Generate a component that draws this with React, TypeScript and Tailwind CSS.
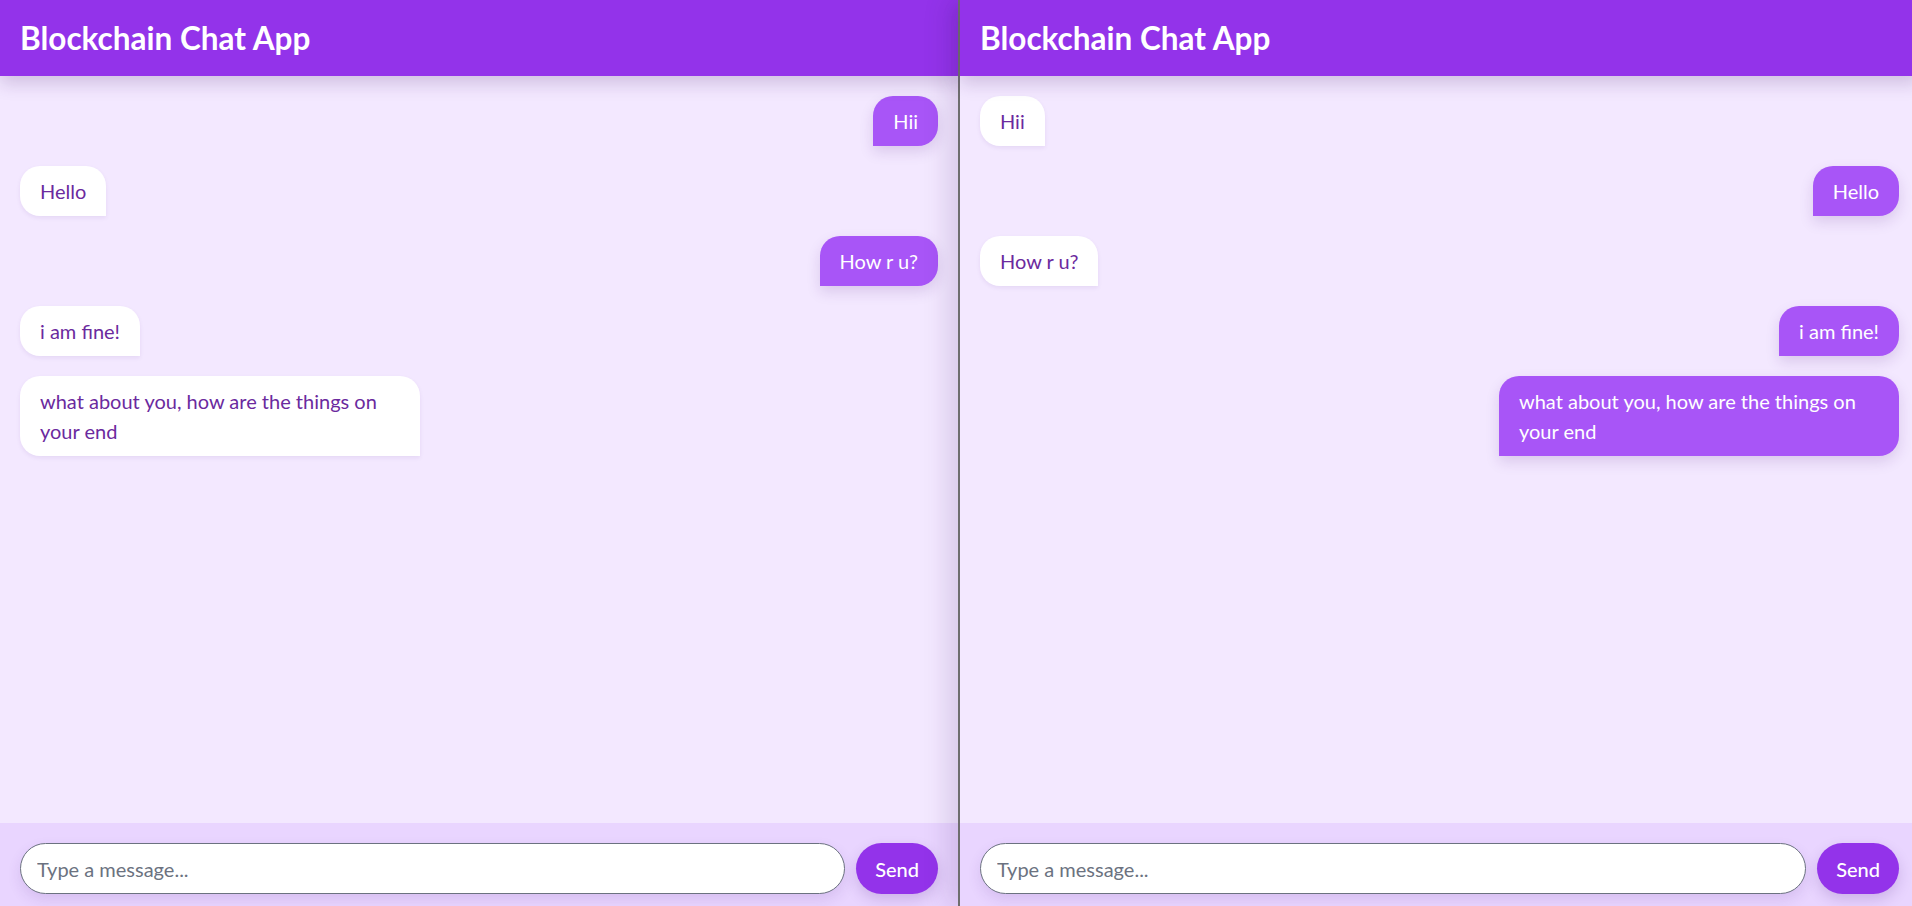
import { useState } from 'react'

type Message = { text: string; fromMe: boolean }

// who wrote what: 0 = left window, 1 = right window
const thread: { text: string; sender: 0 | 1 }[] = [
  { text: 'Hii', sender: 0 },
  { text: 'Hello', sender: 1 },
  { text: 'How r u?', sender: 0 },
  { text: 'i am fine!', sender: 1 },
  { text: 'what about you, how are the things on your end', sender: 1 },
]

function messagesFor(side: 0 | 1): Message[] {
  return thread.map((m) => ({ text: m.text, fromMe: m.sender === side }))
}

function ChatWindow({ side, className = '' }: { side: 0 | 1; className?: string }) {
  const [draft, setDraft] = useState('')
  const messages = messagesFor(side)

  return (
    <div className={`flex h-full shrink-0 flex-col bg-[#f3e8ff] ${className}`}>
      {/* Header */}
      <div className="relative z-10 flex h-[76px] shrink-0 items-center bg-[#9333ea] px-5 shadow-[0_8px_16px_rgba(60,20,100,0.18)]">
        <h1 className="text-[31.5px] font-bold leading-[40px] text-white">Blockchain Chat App</h1>
      </div>

      {/* Messages */}
      <div className="flex flex-1 flex-col gap-5 overflow-hidden p-5">
        {messages.map((m, i) => (
          <div key={i} className={`flex ${m.fromMe ? 'justify-end' : 'justify-start'}`}>
            <div
              className={
                m.fromMe
                  ? 'max-w-[400px] rounded-[20px] rounded-bl-none bg-[#a855f7] px-5 py-[10px] text-[20px] leading-[30px] text-white shadow-[0_6px_14px_rgba(80,30,130,0.15)]'
                  : 'max-w-[400px] rounded-[20px] rounded-br-none bg-white px-5 py-[10px] text-[20px] leading-[30px] text-[#6b2a9e] shadow-[0_2px_4px_rgba(80,30,130,0.08)]'
              }
            >
              {m.text}
            </div>
          </div>
        ))}
      </div>

      {/* Input bar */}
      <div className="flex h-[83px] shrink-0 items-start gap-[11px] bg-[#e9d5ff] px-5 pt-5">
        <input
          value={draft}
          onChange={(e) => setDraft(e.target.value)}
          placeholder="Type a message..."
          className="h-[51px] flex-1 rounded-full border border-[#6b7280] bg-white px-4 text-[20px] text-gray-800 shadow-[0_6px_14px_rgba(80,30,130,0.12)] outline-none placeholder:text-[#6b7280]"
        />
        <button className="h-[51px] rounded-full bg-[#9333ea] px-[19px] text-[20px] font-medium text-white shadow-[0_6px_14px_rgba(80,30,130,0.18)]">
          Send
        </button>
      </div>
    </div>
  )
}

export default function App() {
  return (
    <div className="flex h-screen w-screen overflow-hidden font-['Lato','Noto_Sans',sans-serif]">
      <ChatWindow side={0} className="w-[958px]" />
      <div className="relative z-20 flex h-full shrink-0 shadow-[-10px_0_24px_rgba(60,20,100,0.14)]">
        <div className="h-full w-[2px] bg-[#6e6e6e]" />
        <ChatWindow side={1} className="w-[959px]" />
      </div>
    </div>
  )
}
